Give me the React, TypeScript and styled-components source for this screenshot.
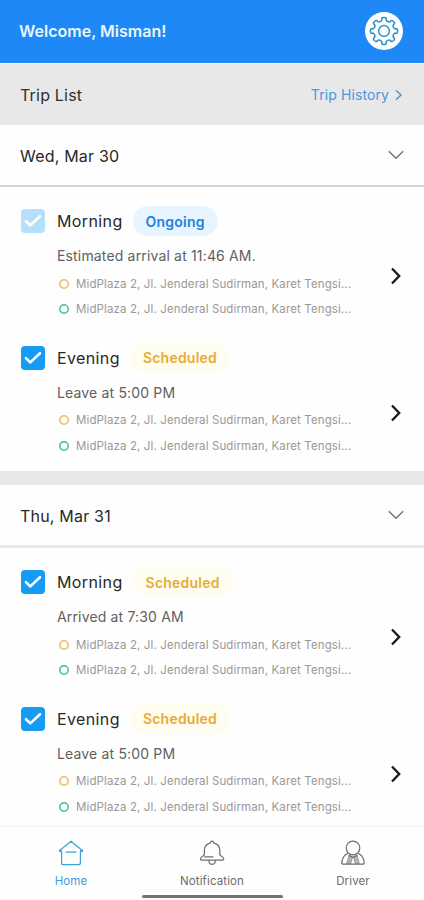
import React from "react";
import styled, { createGlobalStyle } from "styled-components";

const GlobalStyle = createGlobalStyle`
  * { box-sizing: border-box; }
  body { margin: 0; background: #fff; font-family: Inter, "Liberation Sans", sans-serif; }
`;

const Screen = styled.div`
  display: flex;
  flex-direction: column;
  width: 424px;
  height: 900px;
  overflow: hidden;
  background: #fefefe;
`;

const TopBar = styled.header`
  display: flex;
  flex: none;
  align-items: center;
  justify-content: space-between;
  height: 63px;
  padding: 0 21px 2px 19px;
  background: #1e88f7;
`;

const Welcome = styled.h1`
  margin: 0;
  font-size: 16px;
  font-weight: 600;
  letter-spacing: 0.02px;
  color: #e9f6ff;
`;

const SettingsButton = styled.button`
  display: grid;
  place-items: center;
  width: 38px;
  height: 38px;
  padding: 0;
  border: 0;
  border-radius: 50%;
  background: #fff;
`;

const ListBar = styled.div`
  display: flex;
  flex: none;
  align-items: center;
  justify-content: space-between;
  height: 62px;
  padding: 0 21px 0 20px;
  border-top: 1px solid #f4f6f8;
  background: #e8e8e8;
`;

const ListTitle = styled.h2`
  margin: 0;
  font-size: 16px;
  font-weight: 400;
  letter-spacing: 0.2px;
  color: #303030;
`;

const HistoryLink = styled.a`
  display: flex;
  align-items: center;
  gap: 6px;
  font-size: 14px;
  letter-spacing: 0.1px;
  color: #4a97dc;
`;

const Days = styled.main`
  flex: 1;
  min-height: 0;
  overflow: hidden;
`;

const Day = styled.section`
  & + & {
    border-top: 14px solid #e7e7e7;
  }
`;

const DayHeader = styled.div<{ $line: string; $lineWidth: number }>`
  display: flex;
  align-items: center;
  justify-content: space-between;
  height: ${(p) => 60 + p.$lineWidth}px;
  padding: 0 19px 0 20px;
  border-bottom: ${(p) => p.$lineWidth}px solid ${(p) => p.$line};
`;

const DayName = styled.h3`
  margin: 2px 0 0;
  font-size: 16px;
  font-weight: 400;
  letter-spacing: 0.2px;
  color: #282828;
`;

const Trips = styled.div`
  display: flex;
  flex-direction: column;
  gap: 20.5px;
  padding: 19px 22px 12.5px 21px;
`;

const Trip = styled.article`
  display: grid;
  grid-template-columns: 36px 1fr 12px;
`;

const Check = styled.span<{ $faded?: boolean }>`
  display: grid;
  place-items: center;
  width: 24px;
  height: 24px;
  margin-top: 3px;
  border-radius: 4px;
  background: ${(p) => (p.$faded ? "#b5dffa" : "#159bf3")};
`;

const TripHead = styled.div`
  display: flex;
  align-items: center;
  gap: 10px;
  height: 30px;
`;

const Period = styled.span`
  font-size: 16px;
  letter-spacing: 0.38px;
  color: #282828;
`;

const Status = styled.span<{ $live?: boolean }>`
  display: flex;
  align-items: center;
  height: 30px;
  padding: 0 13px;
  border-radius: 15px;
  font-size: 14px;
  font-weight: 600;
  letter-spacing: 0.22px;
  background: ${(p) => (p.$live ? "#e6f5ff" : "#fffdf0")};
  color: ${(p) => (p.$live ? "#1c83dc" : "#e5ac38")};
`;

const Detail = styled.p`
  height: 20px;
  margin: 10px 0 5px;
  font-size: 14px;
  line-height: 20px;
  letter-spacing: 0.16px;
  white-space: nowrap;
  color: #606060;
`;

const Stop = styled.div`
  display: flex;
  align-items: center;
  gap: 7px;
  height: 25.5px;
  padding-left: 2px;
  font-size: 11.5px;
  letter-spacing: 0.12px;
  white-space: nowrap;
  color: #999;
`;

const OpenTrip = styled.span`
  display: flex;
  align-items: center;
  padding-top: 24px;
`;

const Nav = styled.nav`
  display: flex;
  flex: none;
  justify-content: space-between;
  height: 69px;
  padding: 0 0.5px;
  border-top: 1px solid #f4f4f4;
`;

const NavItem = styled.div<{ $active?: boolean }>`
  display: flex;
  flex: 1;
  flex-direction: column;
  align-items: center;
  gap: 7px;
  padding-top: 13px;
  font-size: 11.5px;
  line-height: 16px;
  letter-spacing: 0.12px;
  color: ${(p) => (p.$active ? "#3f9fdb" : "#6c6c6c")};
`;

const BottomArea = styled.div`
  flex: none;
  height: 5px;
`;

const HomeIndicator = styled.div`
  width: 141px;
  height: 3px;
  margin: 0 auto;
  border-radius: 2px;
  background: #747474;
`;

const RingIcon = ({ color }: { color: string }) => (
  <svg width="10" height="10" viewBox="0 0 10 10" fill="none" stroke={color} strokeWidth="1.5">
    <circle cx="5" cy="5" r="4.2" />
  </svg>
);

const TEETH = 8;

function gearPath() {
  const points: string[] = [];
  for (let i = 0; i < TEETH; i++) {
    const base = (i * 2 * Math.PI) / TEETH - Math.PI / 2;
    const at = (r: number, a: number) =>
      `${(15 + r * Math.cos(base + a)).toFixed(2)} ${(15 + r * Math.sin(base + a)).toFixed(2)}`;
    points.push(
      `${i ? "L" : "M"}${at(10.8, -0.22)}`,
      `L${at(13, -0.17)}`,
      `Q${at(14.4, 0)} ${at(13, 0.17)}`,
      `L${at(10.8, 0.22)}`,
      `Q${at(9.5, 0.39)} ${at(10.8, 0.565)}`
    );
  }
  return points.join(" ") + "Z";
}

const Gear = () => (
  <svg width="30" height="30" viewBox="0 0 30 30" fill="none" stroke="#2b8fc9" strokeWidth="1.5" strokeLinejoin="round">
    <path d={gearPath()} />
    <circle cx="15" cy="15" r="5.4" />
  </svg>
);

const Tick = () => (
  <svg width="18" height="14" viewBox="0 0 18 14" fill="none" stroke="#fff" strokeWidth="2.6" strokeLinecap="round" strokeLinejoin="round">
    <path d="M2 7.2 6.3 11.4 16 2.2" />
  </svg>
);

const LinkChevron = () => (
  <svg width="8" height="12" viewBox="0 0 8 12" fill="none" stroke="currentColor" strokeWidth="1.5">
    <path d="m1 1.2 5 4.8-5 4.8" />
  </svg>
);

const DownChevron = () => (
  <svg width="18" height="10" viewBox="0 0 18 10" fill="none" stroke="#747474" strokeWidth="1.5">
    <path d="M1.8 1.2 9 8.2l7.2-7" />
  </svg>
);

const RightChevron = () => (
  <svg width="12" height="18" viewBox="0 0 12 18" fill="none" stroke="#1d1d1d" strokeWidth="2.4">
    <path d="m2 1.5 7.2 7.5L2 16.5" />
  </svg>
);

const iconProps = {
  width: 26,
  height: 26,
  viewBox: "0 0 26 26",
  fill: "none",
  stroke: "currentColor",
  strokeWidth: 1.2,
  strokeLinecap: "round" as const,
  strokeLinejoin: "round" as const,
};

const HomeIcon = () => (
  <svg {...iconProps}>
    <path d="M2 11v-.8L13 1.2l11 9v.8M3.6 11v11.7a2 2 0 0 0 2 2h14.8a2 2 0 0 0 2-2V11M8 12.2h10" />
    <circle cx="2.2" cy="10.8" r=".8" fill="currentColor" />
    <circle cx="23.8" cy="10.8" r=".8" fill="currentColor" />
  </svg>
);

const BellIcon = () => (
  <svg {...iconProps}>
    <path d="M11.6 2.8c0-2.2 3-2.2 3 0 3.8 1 6.2 3.8 6.2 7.4v4.5l3.2 2.7c1.3 1.1.8 2.8-.8 2.8H3c-1.6 0-2.1-1.7-.8-2.8l3.2-2.7v-4.5c0-3.6 2.4-6.4 6.2-7.4Z" />
    <path d="M9.9 20.4c0 5.1 6.4 5.1 6.4 0M5.6 16.8H14" />
  </svg>
);

const DriverIcon = () => (
  <svg {...iconProps}>
    <circle cx="13" cy="8" r="6.8" />
    <path d="M7.4 13.6c-3.7 1.6-5.2 4.7-5.6 8.9-.1 1.1.5 1.7 1.5 1.7h19.4c1 0 1.6-.6 1.5-1.7-.4-4.2-1.9-7.3-5.6-8.9M9 15.4l4 2 4-2" />
    <path d="m8.8 16-2.2 7.6h4.2l1.4-5.2ZM17.2 16l2.2 7.6h-4.2l-1.4-5.2Z" fill="currentColor" fillOpacity=".5" strokeWidth=".5" />
  </svg>
);

interface TripInfo {
  period: string;
  detail: string;
  ongoing?: boolean;
}

const address = "MidPlaza 2, Jl. Jenderal Sudirman, Karet Tengsi...";

const schedule: { name: string; line: string; lineWidth: number; trips: TripInfo[] }[] = [
  {
    name: "Wed, Mar 30",
    line: "#d3d3d3",
    lineWidth: 2,
    trips: [
      { period: "Morning", detail: "Estimated arrival at 11:46 AM.", ongoing: true },
      { period: "Evening", detail: "Leave at 5:00 PM" },
    ],
  },
  {
    name: "Thu, Mar 31",
    line: "#e7e7e7",
    lineWidth: 3,
    trips: [
      { period: "Morning", detail: "Arrived at 7:30 AM" },
      { period: "Evening", detail: "Leave at 5:00 PM" },
    ],
  },
];

const TripRow = ({ period, detail, ongoing }: TripInfo) => (
  <Trip>
    <Check $faded={ongoing}><Tick /></Check>
    <div>
      <TripHead>
        <Period>{period}</Period>
        <Status $live={ongoing}>{ongoing ? "Ongoing" : "Scheduled"}</Status>
      </TripHead>
      <Detail>{detail}</Detail>
      <Stop><RingIcon color="#ecbd5c" />{address}</Stop>
      <Stop><RingIcon color="#3cc596" />{address}</Stop>
    </div>
    <OpenTrip><RightChevron /></OpenTrip>
  </Trip>
);

export default function App() {
  return (
    <>
      <GlobalStyle />
      <Screen>
        <TopBar>
          <Welcome>Welcome, Misman!</Welcome>
          <SettingsButton aria-label="Settings"><Gear /></SettingsButton>
        </TopBar>
        <ListBar>
          <ListTitle>Trip List</ListTitle>
          <HistoryLink>Trip History <LinkChevron /></HistoryLink>
        </ListBar>
        <Days>
          {schedule.map((day) => (
            <Day key={day.name}>
              <DayHeader $line={day.line} $lineWidth={day.lineWidth}>
                <DayName>{day.name}</DayName>
                <DownChevron />
              </DayHeader>
              <Trips>
                {day.trips.map((trip) => <TripRow key={trip.period} {...trip} />)}
              </Trips>
            </Day>
          ))}
        </Days>
        <Nav>
          <NavItem $active><HomeIcon />Home</NavItem>
          <NavItem><BellIcon />Notification</NavItem>
          <NavItem><DriverIcon />Driver</NavItem>
        </Nav>
        <BottomArea><HomeIndicator /></BottomArea>
      </Screen>
    </>
  );
}
